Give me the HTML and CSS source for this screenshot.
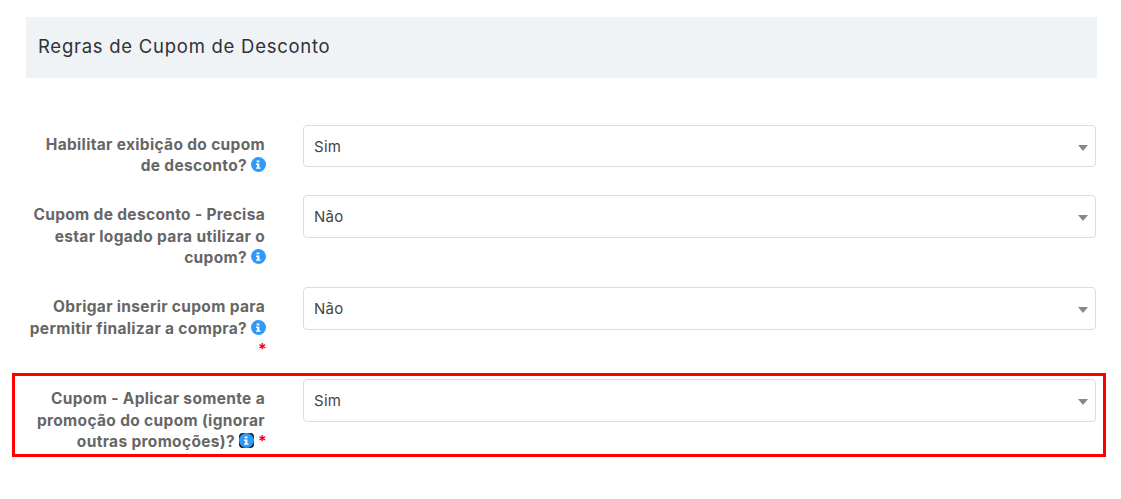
FILE: index.html
```html
<!DOCTYPE html>
<html lang="pt">
<head>
<meta charset="utf-8">
<title>Regras de Cupom de Desconto</title>
<link rel="stylesheet" href="styles.css">
</head>
<body>
<svg class="defs" width="0" height="0" aria-hidden="true"><symbol id="info" viewBox="0 0 16 16"><circle cx="8" cy="8" r="8" fill="#2e9bfb"/><path d="M6 3.6h3v2.1H6zM5.4 7h3.5v4.1h1.3v1.5H5.4v-1.5h1.2V8.5H5.4z" fill="#fff"/></symbol></svg>
<main class="page">
  <h2 class="title">Regras de Cupom de Desconto</h2>
  <form class="form">
    <div class="row">
      <label class="label">Habilitar exibição do cupom<br>de desconto? <svg class="info"><use href="#info"/></svg></label>
      <div class="field"><div class="select">Sim</div></div>
    </div>
    <div class="row">
      <label class="label">Cupom de desconto - Precisa<br>estar logado para utilizar o<br>cupom? <svg class="info"><use href="#info"/></svg></label>
      <div class="field"><div class="select">Não</div></div>
    </div>
    <div class="row">
      <label class="label">Obrigar inserir cupom para<br>permitir finalizar a compra? <svg class="info"><use href="#info"/></svg><br><span class="req">*</span></label>
      <div class="field"><div class="select">Não</div></div>
    </div>
    <div class="row row-marked">
      <label class="label">Cupom - Aplicar somente a<br>promoção do cupom (ignorar<br>outras promoções)? <svg class="info info-focus"><use href="#info"/></svg> <span class="req">*</span></label>
      <div class="field"><div class="select">Sim</div></div>
    </div>
  </form>
</main>
</body>
</html>
```
FILE: styles.css
```css
* { box-sizing: border-box; }
html, body { margin: 0; padding: 0; background: #fff; }
body { font-family: "Inter", "Open Sans", sans-serif; overflow: hidden; }
.defs { position: absolute; }
.page { padding: 17px 24px 0 26px; }
.title {
  margin: 0;
  height: 61px;
  padding-left: 12px;
  background: #f0f3f6;
  color: #2f3237;
  font-size: 18.5px;
  font-weight: 400;
  line-height: 59px;
  letter-spacing: 0.74px;
}
.form { margin-top: 47px; }
.row {
  display: grid;
  grid-template-columns: 239px 793px;
  column-gap: 38px;
  padding-bottom: 18.6px;
}
.label {
  display: block;
  padding-top: 9px;
  text-align: right;
  color: #666;
  font-size: 15.5px;
  font-weight: 700;
  line-height: 21.43px;
  letter-spacing: 0.33px;
  white-space: nowrap;
}
.select {
  position: relative;
  height: 42.4px;
  padding-left: 10px;
  border: 1px solid #dcdcdc;
  border-radius: 4px;
  color: #444;
  font-size: 15px;
  line-height: 42px;
  letter-spacing: 0.3px;
}
.select::after {
  content: "";
  position: absolute;
  top: 19px;
  right: 7px;
  border-style: solid;
  border-width: 6px 5px 0;
  border-color: #888 transparent transparent;
}
.info { width: 15px; height: 15px; margin-right: -1px; vertical-align: -1px; }
.info-focus { margin-right: 0; background: #111; border-radius: 4px; }
.req { margin-right: -2px; color: #f00; }
.row-marked { position: relative; }
.row-marked::before {
  content: "";
  position: absolute;
  left: -14px;
  right: -9px;
  top: -6px;
  bottom: 14px;
  border: 3px solid #f00;
  pointer-events: none;
}
```
